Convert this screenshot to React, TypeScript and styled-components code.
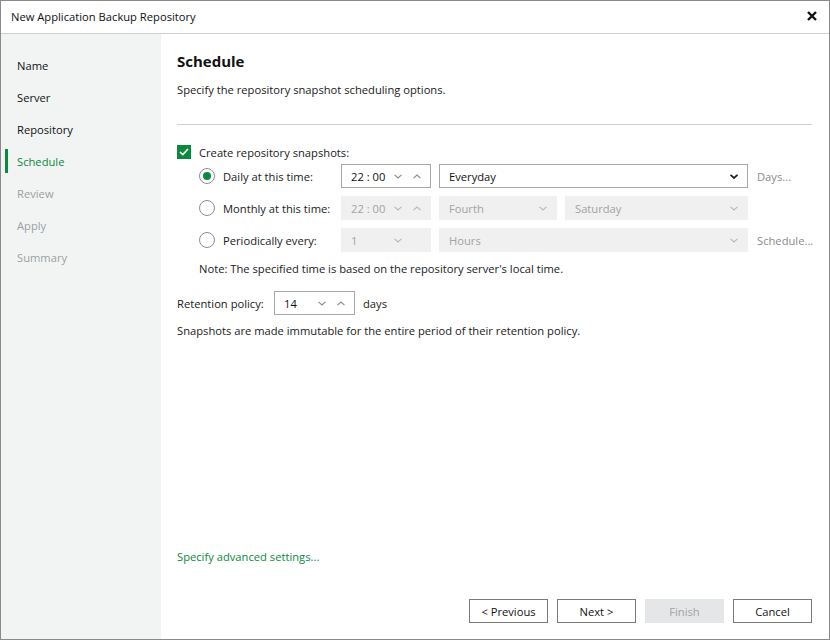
import React from "react";
import styled, { createGlobalStyle, css } from "styled-components";

const Global = createGlobalStyle`
  html, body { margin: 0; padding: 0; background: #ffffff; }
  body { font-family: "Open Sans", "Noto Sans", "Liberation Sans", sans-serif; font-size: 11.2px; color: #1a1a1a; }
  * { box-sizing: border-box; }
`;

const GREEN = "#0a8a3c";

const Window = styled.div`
  width: 830px;
  height: 640px;
  border: 1px solid #8a8a8a;
  display: flex;
  flex-direction: column;
  background: #fff;
`;

const TitleBar = styled.div`
  height: 33px;
  flex: none;
  display: flex;
  align-items: center;
  justify-content: space-between;
  padding: 0 12px 2px 10px;
  border-bottom: 1px solid #cfcfcf;
`;

const Title = styled.span`
  font-size: 11.2px;
  color: #111;
`;

const CloseBtn = styled.span`
  display: flex;
  align-items: center;
`;

const Main = styled.div`
  flex: 1;
  display: flex;
  min-height: 0;
`;

const Sidebar = styled.nav`
  width: 160px;
  flex: none;
  background: #f2f4f4;
  padding-top: 15px;
  display: flex;
  flex-direction: column;
`;

const StepItem = styled.div<{ $state: "done" | "active" | "pending" }>`
  height: 32px;
  display: flex;
  align-items: center;
  padding-left: 16px;
  position: relative;
  color: ${(p) => (p.$state === "pending" ? "#9a9fa3" : p.$state === "active" ? GREEN : "#111")};
  ${(p) =>
    p.$state === "active" &&
    css`
      &::before {
        content: "";
        position: absolute;
        left: 4px;
        top: 4px;
        width: 3px;
        height: 24px;
        background: ${GREEN};
      }
    `}
`;

const Content = styled.section`
  flex: 1;
  min-width: 0;
  display: flex;
  flex-direction: column;
  padding: 17px 17px 16px 16px;
`;

const Heading = styled.h1`
  margin: 0;
  font-size: 15px;
  font-weight: 700;
  line-height: 20px;
  color: #111;
`;

const Subtitle = styled.p`
  margin: 10px 0 0;
  line-height: 18px;
`;

const Divider = styled.hr`
  border: none;
  border-top: 1px solid #cfcfcf;
  margin: 25px 0 0;
  width: 100%;
`;

const CheckRow = styled.label`
  display: flex;
  align-items: center;
  gap: 8px;
  margin-top: 19px;
  height: 16px;
`;

const CheckBox = styled.span`
  width: 14px;
  height: 14px;
  background: ${GREEN};
  display: flex;
  align-items: center;
  justify-content: center;
`;

const Options = styled.div`
  display: flex;
  flex-direction: column;
  gap: 8px;
  padding-left: 22px;
  margin-top: 4px;
`;

const OptionRow = styled.div`
  display: flex;
  align-items: center;
  height: 24px;
`;

const Radio = styled.span<{ $checked?: boolean }>`
  width: 16px;
  height: 16px;
  border-radius: 50%;
  border: 1px solid #8e8e8e;
  background: #fff;
  display: flex;
  align-items: center;
  justify-content: center;
  flex: none;
  &::after {
    content: "";
    width: 8px;
    height: 8px;
    border-radius: 50%;
    background: ${(p) => (p.$checked ? GREEN : "transparent")};
  }
`;

const RadioLabel = styled.span`
  width: 126px;
  padding-left: 8px;
  flex: none;
`;

const Field = styled.div<{ $w: number; $disabled?: boolean }>`
  width: ${(p) => p.$w}px;
  height: 24px;
  flex: none;
  display: flex;
  align-items: center;
  padding: 0 0 0 9px;
  border: 1px solid ${(p) => (p.$disabled ? "#f0f0f0" : "#a8a8a8")};
  background: ${(p) => (p.$disabled ? "#f0f0f0" : "#fff")};
  color: ${(p) => (p.$disabled ? "#a3a3a3" : "#111")};
  margin-right: 8px;
`;

const FieldText = styled.span`
  flex: 1;
`;

const Arrows = styled.span`
  display: flex;
  align-items: center;
  gap: 11px;
  padding-right: 9px;
`;

const SideLink = styled.span`
  color: #8a8a8a;
  margin-left: 1px;
  white-space: nowrap;
`;

const Note = styled.p`
  margin: 8px 0 0 22px;
  line-height: 18px;
`;

const RetentionRow = styled.div`
  display: flex;
  align-items: center;
  margin-top: 13px;
  height: 24px;
`;

const RetentionLabel = styled.span`
  width: 97px;
  flex: none;
`;

const Paragraph = styled.p`
  margin: 7px 0 0;
  line-height: 18px;
`;

const Footer = styled.div`
  margin-top: auto;
  display: flex;
  flex-direction: column;
`;

const Link = styled.a`
  color: ${GREEN};
  text-decoration: none;
  line-height: 18px;
`;

const Buttons = styled.div`
  display: flex;
  justify-content: flex-end;
  gap: 9px;
  margin-top: 33px;
`;

const Button = styled.button`
  width: 79px;
  height: 24px;
  font: inherit;
  font-size: 11.2px;
  border: 1px solid #7a7a7a;
  background: #fff;
  color: #111;
  padding: 0;
  &:disabled {
    background: #e5e6e7;
    border-color: #e5e6e7;
    color: #a3a3a3;
  }
`;

const Down = ({ color = "#9a9a9a", bold = false }: { color?: string; bold?: boolean }) => (
  <svg width="8" height="5" viewBox="0 0 8 5">
    <polyline points="0.5,0.8 4,4 7.5,0.8" fill="none" stroke={color} strokeWidth={bold ? 1.8 : 1.1} />
  </svg>
);
const Up = ({ color = "#9a9a9a" }: { color?: string }) => (
  <svg width="8" height="5" viewBox="0 0 8 5">
    <polyline points="0.5,4.2 4,1 7.5,4.2" fill="none" stroke={color} strokeWidth={1.1} />
  </svg>
);

const Spinner = ({ value, w = 90, disabled, noUp }: { value: string; w?: number; disabled?: boolean; noUp?: boolean }) => (
  <Field $w={w} $disabled={disabled}>
    <FieldText>{value}</FieldText>
    <Arrows>
      <Down color={disabled ? "#b8b8b8" : "#8a8a8a"} />
      {noUp ? <span style={{ width: 8 }} /> : <Up color={disabled ? "#b8b8b8" : "#8a8a8a"} />}
    </Arrows>
  </Field>
);

const Select = ({ value, w, disabled }: { value: string; w: number; disabled?: boolean }) => (
  <Field $w={w} $disabled={disabled}>
    <FieldText>{value}</FieldText>
    <Arrows>
      {disabled ? <Down color="#b8b8b8" /> : <Down color="#222" bold />}
    </Arrows>
  </Field>
);

const steps: { name: string; state: "done" | "active" | "pending" }[] = [
  { name: "Name", state: "done" },
  { name: "Server", state: "done" },
  { name: "Repository", state: "done" },
  { name: "Schedule", state: "active" },
  { name: "Review", state: "pending" },
  { name: "Apply", state: "pending" },
  { name: "Summary", state: "pending" },
];

export default function App() {
  return (
    <>
      <Global />
      <Window>
        <TitleBar>
          <Title>New Application Backup Repository</Title>
          <CloseBtn>
            <svg width="10" height="10" viewBox="0 0 10 10">
              <path d="M1 1 L9 9 M9 1 L1 9" stroke="#111" strokeWidth="2.4" />
            </svg>
          </CloseBtn>
        </TitleBar>
        <Main>
          <Sidebar>
            {steps.map((s) => (
              <StepItem key={s.name} $state={s.state}>
                {s.name}
              </StepItem>
            ))}
          </Sidebar>
          <Content>
            <Heading>Schedule</Heading>
            <Subtitle>Specify the repository snapshot scheduling options.</Subtitle>
            <Divider />
            <CheckRow>
              <CheckBox>
                <svg width="10" height="8" viewBox="0 0 10 8">
                  <polyline points="1,4 3.8,6.6 9,1" fill="none" stroke="#fff" strokeWidth="1.6" />
                </svg>
              </CheckBox>
              Create repository snapshots:
            </CheckRow>
            <Options>
              <OptionRow>
                <Radio $checked />
                <RadioLabel>Daily at this time:</RadioLabel>
                <Spinner value="22 : 00" />
                <Select value="Everyday" w={309} />
                <SideLink>Days...</SideLink>
              </OptionRow>
              <OptionRow>
                <Radio />
                <RadioLabel>Monthly at this time:</RadioLabel>
                <Spinner value="22 : 00" disabled />
                <Select value="Fourth" w={118} disabled />
                <Select value="Saturday" w={183} disabled />
              </OptionRow>
              <OptionRow>
                <Radio />
                <RadioLabel>Periodically every:</RadioLabel>
                <Spinner value="1" disabled noUp />
                <Select value="Hours" w={309} disabled />
                <SideLink>Schedule...</SideLink>
              </OptionRow>
            </Options>
            <Note>Note: The specified time is based on the repository server's local time.</Note>
            <RetentionRow>
              <RetentionLabel>Retention policy:</RetentionLabel>
              <Spinner value="14" w={81} />
              <span>days</span>
            </RetentionRow>
            <Paragraph>Snapshots are made immutable for the entire period of their retention policy.</Paragraph>
            <Footer>
              <Link href="#">Specify advanced settings...</Link>
              <Buttons>
                <Button>&lt; Previous</Button>
                <Button>Next &gt;</Button>
                <Button disabled>Finish</Button>
                <Button>Cancel</Button>
              </Buttons>
            </Footer>
          </Content>
        </Main>
      </Window>
    </>
  );
}
